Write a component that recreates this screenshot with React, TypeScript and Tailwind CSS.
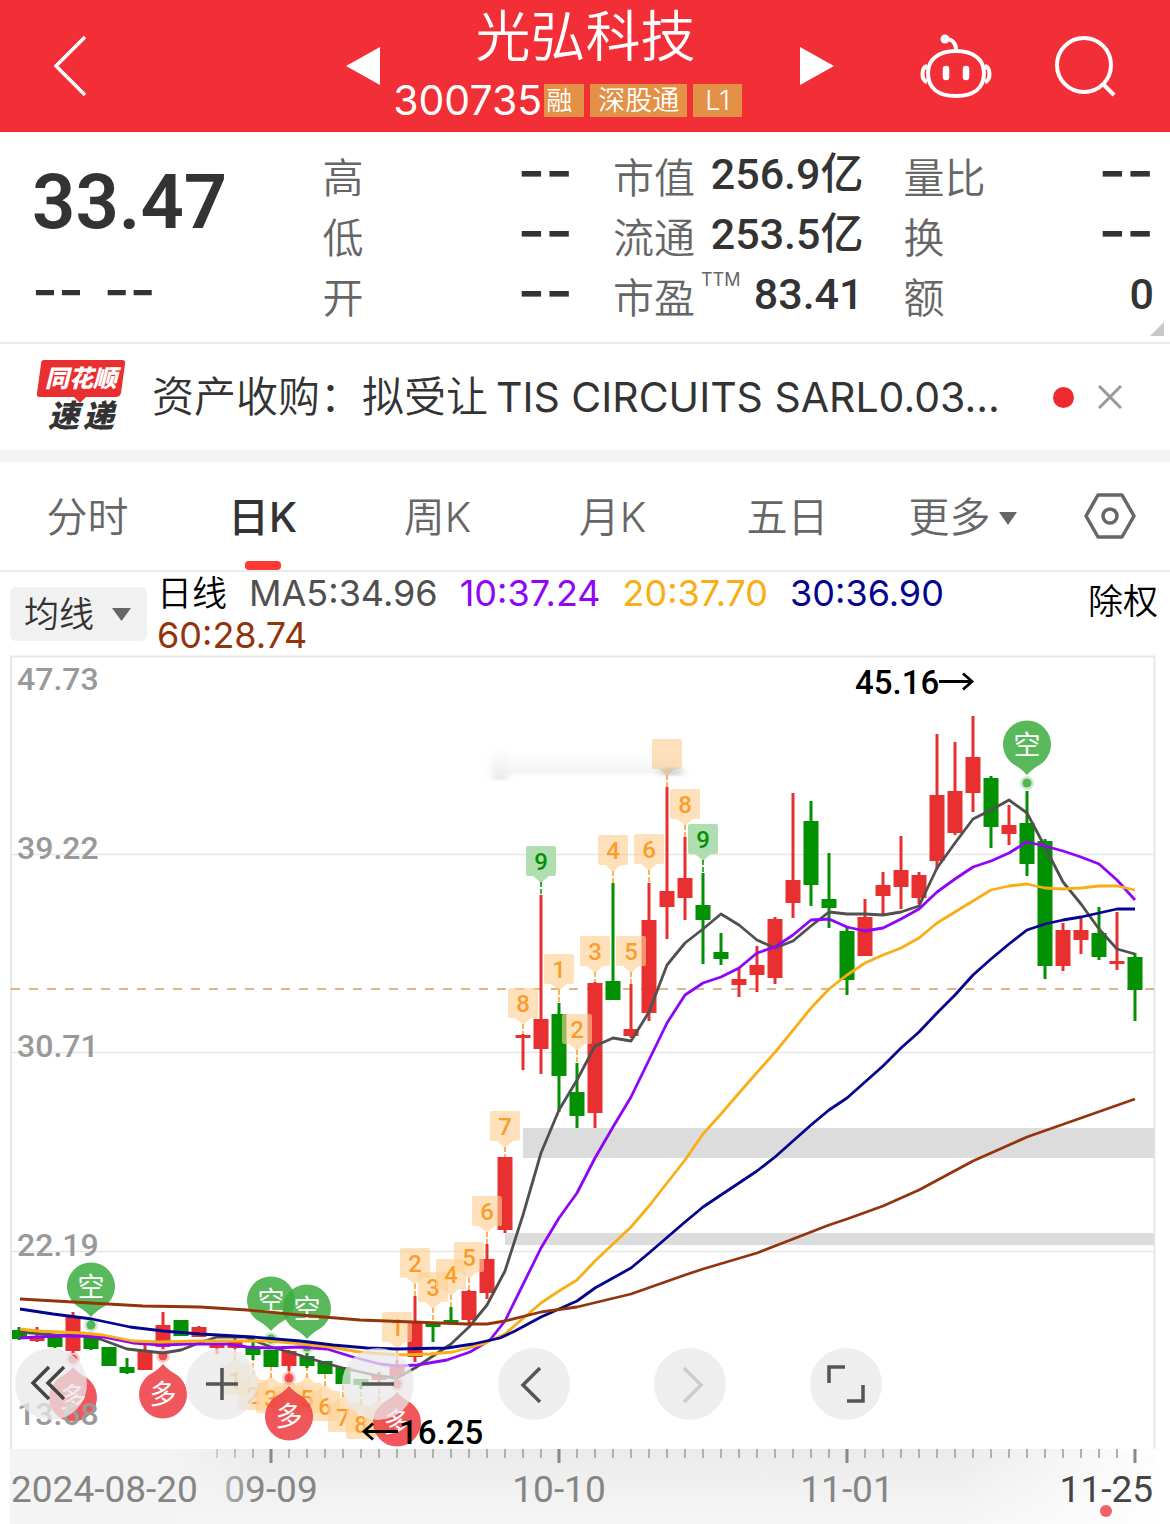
import React, { useState } from 'react';

type Candle = ['r' | 'g', number, number, number, number];
type Flag = [number, number, string, 'o' | 'g'];
type Point = [number, number];

const RED = '#e93030';
const GREEN = '#029102';

// colour, high, body top, body bottom, low
const candles: Candle[] = [
  ['g', 1327, 1330, 1339, 1340], ['r', 1327, 1337, 1341, 1342], ['g', 1335, 1336, 1347, 1348],
  ['r', 1312, 1316, 1351, 1353], ['g', 1335, 1336, 1349, 1350], ['g', 1347, 1347, 1366, 1366],
  ['g', 1358, 1367, 1373, 1374], ['r', 1344, 1350, 1370, 1370], ['r', 1312, 1325, 1347, 1349],
  ['g', 1320, 1320, 1336, 1336], ['r', 1326, 1327, 1337, 1337], ['r', 1343, 1343, 1348, 1354],
  ['r', 1337, 1342, 1348, 1349], ['g', 1337, 1347, 1355, 1360], ['g', 1350, 1350, 1367, 1367],
  ['r', 1350, 1351, 1366, 1371], ['g', 1353, 1356, 1366, 1368], ['g', 1361, 1361, 1374, 1374],
  ['g', 1367, 1367, 1384, 1384], ['g', 1379, 1379, 1385, 1389], ['r', 1372, 1376, 1380, 1383],
  ['r', 1360, 1367, 1376, 1376], ['r', 1296, 1322, 1357, 1362], ['g', 1322, 1323, 1327, 1342],
  ['g', 1307, 1320, 1324, 1324], ['r', 1290, 1291, 1320, 1324], ['r', 1244, 1259, 1293, 1299],
  ['r', 1157, 1157, 1230, 1233], ['r', 1034, 1035, 1038, 1070], ['r', 895, 1019, 1049, 1074],
  ['g', 1003, 1014, 1076, 1112], ['g', 1063, 1092, 1116, 1128], ['r', 982, 983, 1113, 1128],
  ['g', 883, 981, 1000, 1000], ['r', 984, 1029, 1036, 1038], ['r', 883, 920, 1013, 1021],
  ['r', 787, 891, 907, 939], ['r', 837, 878, 898, 920], ['g', 873, 905, 920, 964],
  ['g', 933, 952, 959, 965], ['r', 968, 979, 985, 997], ['r', 946, 965, 975, 992],
  ['r', 917, 919, 978, 984], ['r', 793, 880, 903, 918], ['g', 801, 821, 885, 906],
  ['g', 853, 899, 908, 928], ['g', 927, 931, 980, 995], ['r', 899, 917, 956, 956],
  ['r', 872, 885, 896, 914], ['r', 836, 870, 887, 909], ['r', 872, 875, 898, 904],
  ['r', 734, 795, 861, 869], ['r', 742, 791, 833, 835], ['r', 716, 757, 793, 812],
  ['g', 776, 778, 827, 848], ['r', 805, 825, 834, 845], ['g', 791, 823, 864, 876],
  ['g', 839, 841, 966, 979], ['r', 923, 930, 966, 971], ['r', 918, 930, 940, 954],
  ['g', 907, 933, 957, 960], ['r', 912, 961, 964, 970], ['g', 953, 957, 990, 1021]
];

// candle index, box top, label, colour
const topFlags: Flag[] = [
  [21, 1312, '1', 'o'], [22, 1248, '2', 'o'], [23, 1272, '3', 'o'], [24, 1259, '4', 'o'],
  [25, 1242, '5', 'o'], [26, 1196, '6', 'o'], [27, 1111, '7', 'o'], [28, 988, '8', 'o'],
  [29, 846, '9', 'g'], [30, 954, '1', 'o'], [31, 1014, '2', 'o'], [32, 936, '3', 'o'],
  [33, 835, '4', 'o'], [34, 936, '5', 'o'], [35, 834, '6', 'o'], [36, 739, '', 'o'],
  [37, 789, '8', 'o'], [38, 824, '9', 'g']
];
const bottomFlags: Flag[] = [
  [12, 1365, '1', 'o'], [13, 1380, '2', 'o'], [14, 1383, '3', 'o'], [15, 1386, '', 'o'],
  [16, 1383, '5', 'o'], [17, 1391, '6', 'o'], [18, 1402, '7', 'o'], [19, 1409, '8', 'o'],
  [20, 1406, '', 'o']
];

const bearPins: Point[] = [[4, 1287], [14, 1301], [16, 1309], [56, 745]];
const bullPins: Point[] = [[3, 1397], [8, 1394], [15, 1416], [21, 1422]];

const averages = [
  {
    color: '#505050',
    points: '20,1332 55,1335 83,1336 100,1339 127,1349 145,1351 163,1353 181,1350 199,1343 217,1337 245,1337 271,1347 289,1352 325,1363 343,1368 379,1376 397,1378 415,1368 433,1356 451,1344 469,1327 487,1305 505,1271 523,1215 541,1153 559,1110 577,1080 595,1046 613,1038 631,1041 649,1012 667,965 685,943 703,929 721,914 739,925 757,940 775,948 793,941 811,926 829,912 847,914 865,914 883,915 901,912 919,906 937,868 955,843 973,819 991,810 1009,800 1027,813 1045,847 1063,882 1081,904 1099,929 1117,949 1135,954'
  },
  {
    color: '#8f05f5',
    points: '20,1338 37,1337 60,1336 83,1336 103,1337 133,1343 163,1345 187,1344 227,1344 247,1347 270,1348 300,1347 327,1349 353,1357 380,1364 397,1366 417,1365 447,1360 470,1352 490,1340 505,1321 541,1248 559,1218 577,1193 595,1158 613,1127 631,1097 649,1060 667,1023 685,995 703,983 721,977 739,968 757,953 775,947 793,935 811,920 829,919 847,927 865,931 883,928 901,919 919,909 937,892 955,879 973,867 991,861 1009,853 1027,842 1045,846 1063,851 1081,857 1099,864 1117,880 1135,900'
  },
  {
    color: '#f9ae16',
    points: '20,1329 37,1331 83,1333 103,1335 133,1341 160,1342 200,1341 247,1341 270,1341 303,1344 330,1347 360,1352 397,1355 430,1354 453,1352 483,1344 505,1334 541,1303 559,1291 577,1280 595,1261 613,1244 631,1227 649,1206 667,1183 685,1160 703,1134 721,1114 739,1093 777,1050 811,1008 829,989 847,975 865,963 883,955 901,948 919,938 937,923 955,912 973,901 991,890 1009,886 1027,884 1045,888 1063,889 1081,888 1099,886 1117,886 1135,890'
  },
  {
    color: '#04048f',
    points: '20,1309 53,1314 92,1319 130,1327 163,1331 200,1334 253,1337 300,1341 333,1345 367,1348 397,1349 447,1348 473,1344 500,1338 515,1331 541,1317 577,1301 595,1288 631,1268 649,1253 685,1222 703,1207 739,1183 757,1171 775,1157 793,1141 811,1125 829,1110 847,1098 865,1082 883,1066 901,1048 919,1032 937,1013 955,995 973,975 991,959 1009,944 1027,930 1045,924 1063,920 1081,917 1099,913 1117,909 1135,909'
  },
  {
    color: '#93350c',
    points: '20,1299 73,1302 143,1306 200,1307 247,1310 300,1315 360,1320 413,1322 467,1324 487,1324 505,1321 541,1312 577,1307 631,1294 685,1275 703,1269 757,1253 793,1239 829,1225 847,1219 883,1206 919,1190 973,1161 1027,1137 1081,1118 1135,1099'
  }
];

const priceLabels: [number, string][] = [
  [690, '47.73'], [859, '39.22'], [1057, '30.71'], [1256, '22.19'], [1425, '13.68']
];

const quoteColumns = [
  [['高', '', '--'], ['低', '', '--'], ['开', '', '--']],
  [['市值', '', '256.9亿'], ['流通', '', '253.5亿'], ['市盈', 'TTM', '83.41']],
  [['量比', '', '--'], ['换', '', '--'], ['额', '', '0']]
];

const cx = (i: number) => 19 + i * 18;

const Header: React.FC = () => {
  return <header className="flex h-[132px] items-center bg-[#f22f37] pl-[54px] pr-[54px] text-white">
      <button type="button" aria-label="返回">
        <svg width="32" height="60" viewBox="0 0 32 60" fill="none" stroke="white" strokeWidth="3.5">
          <path d="M31 1 2 30 31 59" />
        </svg>
      </button>
      <div className="grow-3" />
      <div className="flex w-[488px] items-center justify-between">
        <button type="button" aria-label="上一只">
          <svg width="34" height="38" viewBox="0 0 34 38" fill="white"><path d="M34 0v38L0 19z" /></svg>
        </button>
        <div className="flex flex-col items-center gap-3">
          <h1 className="pr-2 text-[55px] font-[350] leading-[60px]">光弘科技</h1>
          <div className="flex h-12 items-center gap-1.5 pb-1 pr-11">
            <span className="-mr-1 text-[41px] leading-[48px]">300735</span>
            <span className="h-[33px] bg-[#e39147] pl-0.5 pr-3 text-[26px] font-[350] leading-[33px]">融</span>
            <span className="h-[33px] bg-[#e39147] px-2 text-[27px] font-[350] leading-[33px]">深股通</span>
            <span className="h-[33px] bg-[#e39147] px-3 text-[27px] font-[350] leading-[33px]">L1</span>
          </div>
        </div>
        <button type="button" aria-label="下一只">
          <svg width="34" height="38" viewBox="0 0 34 38" fill="white"><path d="M0 0v38l34-19z" /></svg>
        </button>
      </div>
      <div className="grow" />
      <button type="button" aria-label="智能助手">
        <svg width="72" height="66" viewBox="921 31 72 66" fill="none" stroke="white" strokeWidth="4">
          <path d="M957 49c17 0 28 8 28 22 0 16-11 23-28 23s-28-7-28-23c0-14 11-22 28-22z" />
          <path d="M928 64c-6 2-6 14 0 16M986 64c6 2 6 14 0 16M957 48c0-7-4-11-10-11" />
          <circle cx="946" cy="37" r="4.500" fill="white" stroke="none" />
          <path d="M947 67v8M967 67v8" strokeWidth="6.500" strokeLinecap="round" />
        </svg>
      </button>
      <button type="button" aria-label="搜索" className="ml-[62px]">
        <svg width="62" height="62" viewBox="1055 34 62 62" fill="none" stroke="white" strokeWidth="4">
          <circle cx="1085" cy="64" r="27" />
          <path d="m1103 82 12 12" />
        </svg>
      </button>
    </header>;
};

const QuoteValue: React.FC<{ value: string }> = ({ value }) => {
  if (value === '--') {
    return <span className="text-[60px] font-medium">{value}</span>;
  }
  return <span className="font-[Roboto,'Noto_Sans_CJK_SC',sans-serif] text-[43px] font-medium">{value}</span>;
};

const QuotePanel: React.FC = () => {
  return <section className="relative grid h-[212px] grid-cols-4 gap-10 border-b-2 border-[#ebebeb] pl-8 pr-4 pt-4 text-[#333]">
      <div>
        <div className="font-[Roboto,sans-serif] text-[76px] font-semibold leading-[108px]">33.47</div>
        <div className="flex gap-5 text-[56px] font-medium leading-[68px]">
          <span>--</span>
          <span>--</span>
        </div>
      </div>
      {quoteColumns.map((rows, i) => <dl key={i}>
          {rows.map(([label, note, value]) => <div key={label} className="flex h-[60px] items-center justify-between whitespace-nowrap leading-[60px]">
              <dt className="flex text-[41px] font-[350] text-[#666]">
                {label}
                {note && <span className="pl-1.5 text-lg font-normal leading-6">{note}</span>}
              </dt>
              <dd><QuoteValue value={value} /></dd>
            </div>)}
        </dl>)}
      <svg className="absolute bottom-1.5 right-1.5" width="14" height="14" viewBox="0 0 14 14" fill="#c8c8c8"><path d="M14 0v14H0z" /></svg>
    </section>;
};

const NewsBar: React.FC = () => {
  return <section className="flex h-[118px] items-center border-b-12 border-[#f4f4f4] pl-9">
      <div className="relative flex w-[90px] shrink-0 flex-col items-center">
        <svg className="absolute left-0 top-0" width="90" height="44" viewBox="0 0 90 44" fill="#e93030">
          <path d="M8 0h78q4 0 3 4l-4 29q-1 4-5 4H50l-6 6-6-6H4q-4 0-3-4L5 4q0-4 3-4z" />
        </svg>
        <span className="relative text-[24px] font-black italic leading-[38px] text-white">同花顺</span>
        <span className="flex gap-1 text-[31px] font-black italic leading-[36px] text-[#333]"><span>速</span><span>递</span></span>
      </div>
      <a href="#news" className="ml-[26px] flex-1 whitespace-nowrap text-[42px] font-[350] text-[#333]">
        资产收购：拟受让<span className="pl-2 text-[41px] font-normal">TIS CIRCUITS SARL0.03...</span>
      </a>
      <span className="size-[21px] rounded-full bg-[#ee2a31]" />
      <button type="button" aria-label="关闭" className="ml-6 mr-12">
        <svg width="24" height="24" viewBox="0 0 24 24" stroke="#999" strokeWidth="3"><path d="m1 1 22 22M23 1 1 23" /></svg>
      </button>
    </section>;
};

const tabs = ['分时', '日K', '周K', '月K', '五日', '更多'];

const PeriodTabs: React.FC = () => {
  const [active, setActive] = useState('日K');
  return <nav className="flex h-[110px] border-b-2 border-[#ebebeb]">
      {tabs.map(tab => <button key={tab} type="button" onClick={() => setActive(tab)} className={`relative flex flex-1 items-center justify-center gap-2 pt-1 text-[41px] ${tab === active ? 'font-medium text-[#333]' : 'font-[350] text-[#666]'}`}>
          {tab}
          {tab === '更多' && <svg width="18" height="13" viewBox="0 0 18 13" fill="#666"><path d="M0 0h18L9 13z" /></svg>}
          {tab === active && <span className="absolute bottom-0 h-[9px] w-9 rounded bg-[#fd3a33]" />}
        </button>)}
      <button type="button" aria-label="设置" className="flex w-[120px] items-center justify-center">
        <svg width="52" height="46" viewBox="0 0 52 46" fill="none" stroke="#666" strokeWidth="3.500" strokeLinejoin="round">
          <path d="M14 2h24l12 21-12 21H14L2 23z" />
          <circle cx="26" cy="23" r="7" />
        </svg>
      </button>
    </nav>;
};

const Legend: React.FC = () => {
  return <div className="flex items-start pl-2.5 pr-3">
      <label className="relative mt-[15px] flex h-[54px] w-[137px] shrink-0 items-center rounded-md bg-[#f1f1f1]">
        <select aria-label="指标" className="w-full appearance-none bg-transparent pl-3.5 text-[35px] font-[350] text-[#333] outline-none">
          <option>均线</option>
        </select>
        <svg className="pointer-events-none absolute right-4" width="19" height="13" viewBox="0 0 19 13" fill="#666"><path d="M0 0h19L9.500 13z" /></svg>
      </label>
      <div className="ml-2.5 flex h-20 flex-1 flex-wrap gap-x-[22px] text-[36px] leading-[42px]">
        <span className="text-[35px] font-[350] text-black">日线</span>
        <span className="text-[#505050]">MA5:34.96</span>
        <span className="text-[#8f05f5]">10:37.24</span>
        <span className="text-[#f9ae16]">20:37.70</span>
        <span className="text-[#04048f]">30:36.90</span>
        <span className="w-full text-[#93350c]">60:28.74</span>
      </div>
      <button type="button" className="text-[35px] font-[350] leading-[58px] text-black">除权</button>
    </div>;
};

const FlagMark: React.FC<{ flag: Flag; below?: boolean }> = ({ flag, below }) => {
  const [i, y, label, tone] = flag;
  const x = cx(i);
  const fill = tone === 'g' ? '#b0deb0' : '#fdcf8f';
  const color = tone === 'g' ? GREEN : '#fb9d2a';
  const pointer = below ? `M${x - 8} ${y}l6-5 2-4 2 4 6 5z` : `M${x - 8} ${y + 30}l6 5 2 4 2-4 6-5z`;
  const end = below ? candles[i][4] : candles[i][1];
  return <g>
      <g fill={fill} fillOpacity={tone === 'g' ? 1 : 0.62}>
        <rect x={x - 15} y={y} width="30" height="30" rx="2" />
        <path d={pointer} />
      </g>
      <line x1={x} x2={x} y1={below ? y - 5 : y + 36} y2={end} stroke={color} strokeWidth="1.500" strokeDasharray="5 2" />
      {label && <text x={x} y={y + 24} textAnchor="middle" fill={color} className="font-[Roboto,sans-serif] text-[24px] font-medium">{label}</text>}
    </g>;
};

const Chart: React.FC = () => {
  return <svg className="block h-auto w-full" viewBox="0 652 1170 872">
      <defs>
        <linearGradient id="axis" x1="0" x2="0" y1="0" y2="1">
          <stop offset="0" stopColor="#ebebeb" />
          <stop offset="1" stopColor="#f6f6f6" />
        </linearGradient>
        <linearGradient id="fadeLeft">
          <stop offset="0.600" stopColor="#f4f4f4" />
          <stop offset="1" stopColor="#f4f4f4" stopOpacity="0" />
        </linearGradient>
        <linearGradient id="fadeRight">
          <stop offset="0" stopColor="#fff" stopOpacity="0" />
          <stop offset="1" stopColor="#fff" />
        </linearGradient>
        <linearGradient id="smudge" x1="0" x2="0" y1="0" y2="1">
          <stop offset="0" stopColor="#999" stopOpacity="0" />
          <stop offset="1" stopColor="#999" stopOpacity="0.220" />
        </linearGradient>
        <filter id="soft"><feGaussianBlur stdDeviation="4 1" /></filter>
      </defs>

      <g stroke="#e6e6e6" strokeWidth="1.500">
        <path d="M11 854.500H1154M11 1052.500H1154M11 1251.500H1154" />
      </g>
      <path d="M11 1449V656.500H1154.500V1449" fill="none" stroke="#e8e8e8" strokeWidth="2" />
      <rect x="523" y="1128" width="631" height="30" fill="#dcdcdc" />
      <rect x="505" y="1233" width="649" height="12" fill="#dcdcdc" />
      <path d="M11 989H1154" stroke="#cf9f68" strokeWidth="1.500" strokeDasharray="9 9" />

      {candles.map(([tone, high, top, bottom, low], i) => {
        const color = tone === 'r' ? RED : GREEN;
        return <g key={i} fill={color}>
            <rect x={cx(i) - 1.5} y={high} width="3" height={low - high} />
            <rect x={i === 0 ? 12 : cx(i) - 7.5} y={top} width="15" height={bottom - top} />
          </g>;
      })}

      {bottomFlags.map(flag => <FlagMark key={flag[0]} flag={flag} below />)}
      {topFlags.map(flag => <FlagMark key={flag[0]} flag={flag} />)}
      <g filter="url(#soft)">
        <rect x="492" y="748" width="16" height="32" fill="url(#smudge)" />
        <rect x="508" y="752" width="172" height="22" fill="url(#smudge)" fillOpacity="0.500" />
        <rect x="660" y="768" width="22" height="8" fill="#999" fillOpacity="0.300" />
      </g>

      {bearPins.map(([i, y]) => <g key={i} fill="#3fae42" fillOpacity="0.870">
          <path d={`M${cx(i) - 14} ${y + 19}a24 24 0 1 1 28 0q-9 5-14 11-5-6-14-11z`} />
          <circle cx={cx(i)} cy={y + 38} r="7" fillOpacity="0.250" />
          <circle cx={cx(i)} cy={y + 38} r="4.500" />
          <text x={cx(i)} y={y + 10} textAnchor="middle" fill="white" fillOpacity="1" className="text-[27px]">空</text>
        </g>)}
      {bullPins.map(([i, y]) => <g key={i} fill="#ec3a3f" fillOpacity="0.850">
          <path d={`M${cx(i) - 14} ${y - 19}a24 24 0 1 0 28 0q-9-5-14-11-5 6-14 11z`} />
          <circle cx={cx(i)} cy={y - 38} r="7" fillOpacity="0.250" />
          <circle cx={cx(i)} cy={y - 38} r="4.500" />
          <text x={cx(i)} y={y + 10} textAnchor="middle" fill="white" fillOpacity="1" className="text-[27px]">多</text>
        </g>)}

      {averages.map(({ color, points }) => <polyline key={color} points={points} fill="none" stroke={color} strokeWidth="2.800" strokeLinejoin="round" />)}

      {priceLabels.map(([y, label]) => <text key={label} x="17" y={y} fill="#999" className="font-[Roboto,sans-serif] text-[32px] font-medium">{label}</text>)}

      <g className="font-[Roboto,sans-serif] text-[33px] font-medium" fill="#000">
        <text x="855" y="694">45.16</text>
        <text x="399" y="1444">16.25</text>
      </g>
      <path d="M939 681.500h33m-9-8 9 8-9 8M398 1431.500h-34m9-8-9 8 9 8" fill="none" stroke="#000" strokeWidth="2.800" />

      <rect x="10" y="1449" width="1145" height="75" fill="url(#axis)" />
      <rect x="955" y="1449" width="215" height="75" fill="url(#fadeRight)" />
      {Array.from({ length: 52 }).map((_, n) => {
        const i = n + 11;
        const major = (i - 14) % 16 === 0;
        return <rect key={i} x={cx(i) - (major ? 1.5 : 1)} y="1449" width={major ? 3 : 2} height={major ? 14 : 9} fill={major ? '#888' : '#b0b0b0'} />;
      })}
      <g className="font-[Roboto,sans-serif] text-[37px]" fill="#858585" textAnchor="middle">
        <text x="271" y="1502">09-09</text>
        <text x="559" y="1502">10-10</text>
        <text x="847" y="1502">11-01</text>
        <rect x="10" y="1449" width="250" height="75" fill="url(#fadeLeft)" />
        <text x="11" y="1502" textAnchor="start">2024-08-20</text>
        <text x="1153" y="1502" textAnchor="end" fill="#444">11-25</text>
      </g>
      <circle cx="1106" cy="1511" r="6" fill="#f26066" />
    </svg>;
};

const controls = [
  { label: '最早', d: 'M34 19 18 35l16 16M49 19 33 35l16 16', color: '#444' },
  { label: '放大', d: 'M36 20v32M20 36h32', color: '#555' },
  { label: '缩小', d: 'M20 36h32', color: '#555' },
  { label: '向前', d: 'M42 20 25 37l17 17', color: '#555' },
  { label: '向后', d: 'M30 20l17 17-17 17', color: '#ccc' },
  { label: '全屏', d: 'M19 35V19h16M53 37v16H37', color: '#555' }
];

const ChartControls: React.FC = () => {
  return <div className="absolute bottom-[104px] left-[15px] flex gap-[84px]">
      {controls.map(({ label, d, color }, i) => <button key={label} type="button" aria-label={label} className={`size-[72px] rounded-full bg-[#e8e8e8]/75 ${i === 0 ? 'mr-[15px]' : ''}`}>
          <svg width="72" height="72" viewBox="0 0 72 72" fill="none" stroke={color} strokeWidth="3.500"><path d={d} /></svg>
        </button>)}
    </div>;
};

export default function App() {
  return <main className="w-full bg-white font-[Inter,'Noto_Sans_CJK_SC',sans-serif]">
      <Header />
      <QuotePanel />
      <NewsBar />
      <PeriodTabs />
      <Legend />
      <div className="relative">
        <Chart />
        <ChartControls />
      </div>
    </main>;
}
